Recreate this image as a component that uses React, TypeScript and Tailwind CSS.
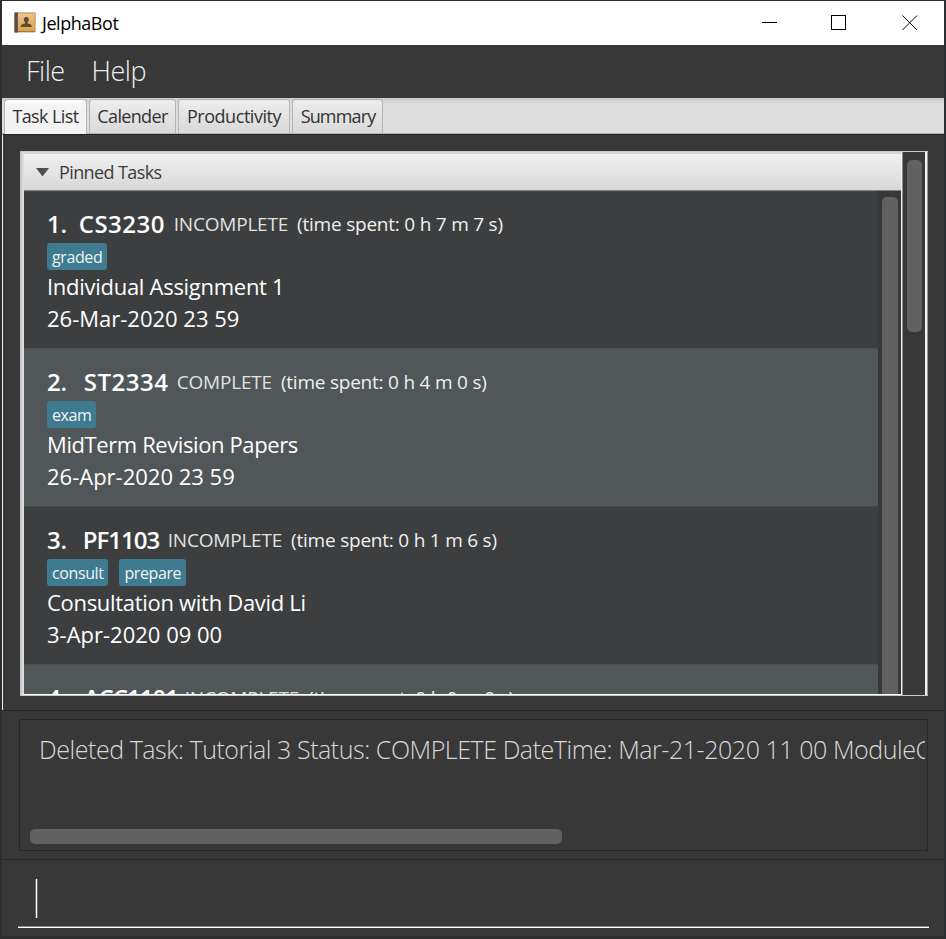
type Task = {
  index: string;
  module: string;
  moduleClass: string;
  status: string;
  spent: string;
  tags: string[];
  name: string;
  nameClass: string;
  date: string;
};

const tasks: Task[] = [
  {
    index: "1.",
    module: "CS3230",
    moduleClass: "ml-[12px] w-[95px] tracking-[0.5px]",
    status: "INCOMPLETE",
    spent: "(time spent: 0 h 7 m 7 s)",
    tags: ["graded"],
    name: "Individual Assignment 1",
    nameClass: "tracking-[-0.28px]",
    date: "26-Mar-2020 23 59",
  },
  {
    index: "2.",
    module: "ST2334",
    moduleClass: "ml-[17px] w-[93px] tracking-[0.5px]",
    status: "COMPLETE",
    spent: "(time spent: 0 h 4 m 0 s)",
    tags: ["exam"],
    name: "MidTerm Revision Papers",
    nameClass: "tracking-[-0.4px]",
    date: "26-Apr-2020 23 59",
  },
  {
    index: "3.",
    module: "PF1103",
    moduleClass: "ml-[16px] w-[85px] tracking-[-1px]",
    status: "INCOMPLETE",
    spent: "(time spent: 0 h 1 m 6 s)",
    tags: ["consult", "prepare"],
    name: "Consultation with David Li",
    nameClass: "tracking-[-0.3px]",
    date: "3-Apr-2020 09 00",
  },
  {
    index: "4.",
    module: "ACC1101",
    moduleClass: "ml-[17px] w-[101px] tracking-[-1px]",
    status: "INCOMPLETE",
    spent: "(time spent: 0 h 0 m 0 s)",
    tags: [],
    name: "",
    nameClass: "",
    date: "",
  },
];

const tabs = [
  { label: "Task List", className: "w-[83px] tracking-[-0.6px]", active: true },
  { label: "Calender", className: "w-[87px] tracking-[-0.65px]", active: false },
  { label: "Productivity", className: "w-[112px] tracking-[-0.45px]", active: false },
  { label: "Summary", className: "w-[91px] pl-px tracking-[-0.85px]", active: false },
];

function BookIcon() {
  return (
    <svg width="22" height="22" viewBox="0 0 22 22">
      <defs>
        <linearGradient id="cover" x1="0" y1="0" x2="0" y2="1">
          <stop offset="0" stopColor="#e6c690" />
          <stop offset="1" stopColor="#d6a44e" />
        </linearGradient>
      </defs>
      <rect x="0.5" y="0.5" width="21" height="20" rx="0.8" fill="#a87a38" />
      <rect x="1" y="20" width="20" height="1" fill="#d8d0c0" />
      <rect x="3.5" y="1.3" width="17.3" height="17.7" fill="url(#cover)" />
      <rect x="0.5" y="0.5" width="3.3" height="20" fill="#5d4c46" />
      <path
        d="M12.3 5C14 5 14.8 6 14.8 7.6c0 1.200-.5 2.100-1.200 2.800v1.200c1.700.4 4.200.7 4.200 3.400H6.800c0-2.700 2.500-3 4.200-3.400v-1.200C10.300 9.700 9.800 8.800 9.800 7.600 9.800 6 10.600 5 12.300 5z"
        fill="#5f4c2c"
      />
    </svg>
  );
}

function TitleBar() {
  return (
    <header className="flex h-11 shrink-0 items-center bg-white pl-3 text-black">
      <BookIcon />
      <h1 className="ml-[6px] text-[18px] leading-6 tracking-[-0.45px]">JelphaBot</h1>
      <svg className="ml-auto mr-[26px]" width="157" height="16" viewBox="0 0 157 16" fill="none" stroke="#000">
        <path d="M1 7.5h15" />
        <rect x="70.5" y="0.5" width="14" height="14" />
        <path d="M141.5 0.5l14.5 14.5M156 0.5l-14.5 14.5" />
      </svg>
    </header>
  );
}

function TaskCard({ task, shaded }: { task: Task; shaded: boolean }) {
  return (
    <li className={`h-[158px] shrink-0 border-t pl-[23px] pt-[14px] first:h-[157px] first:pt-[13px] ${shaded ? "border-[#485052] bg-[#515658]" : "border-[#45484a] bg-[#3c3e3f]"}`}>
      <div className="flex h-[38px] items-center whitespace-pre">
        <b className="text-[24px] font-semibold tracking-[-0.3px]">{task.index}</b>
        <b className={`text-[24px] font-semibold ${task.moduleClass}`}>{task.module}</b>
        <span className="text-[19px] tracking-[-0.2px] text-[#e2e2e2]">{task.status}</span>
        <span className="ml-[9px] text-[19px] tracking-[-0.22px] text-[#f0f0f0]">{task.spent}</span>
      </div>
      <div className="flex h-[27px] gap-[11px]">
        {task.tags.map((tag) => (
          <span key={tag} className="rounded-[3px] bg-[#3e7b91] px-[5px] text-[16px] leading-[28px] tracking-[-0.4px] text-[#f2f2f2]">
            {tag}
          </span>
        ))}
      </div>
      <p className={`h-8 text-[22px] leading-8 ${task.nameClass}`}>{task.name}</p>
      <p className="h-8 text-[22px] leading-8">{task.date}</p>
    </li>
  );
}

export default function App() {
  return (
    <div className="flex h-[939px] w-[946px] flex-col bg-[#2b2d2e] pl-[2px] pr-[2px] pt-px font-['Open_Sans','Noto_Sans',sans-serif] text-white">
      <TitleBar />
      <nav className="flex h-[53px] shrink-0 items-center gap-[27px] bg-[#383838] pl-6 text-[27px] font-light tracking-[-0.5px] text-[#efefef]">
        <span>File</span>
        <span>Help</span>
      </nav>
      <div className="flex h-9 shrink-0 gap-[2px] border-b border-[#b4b4b4] bg-linear-to-b from-[#cccccc] to-[#dedede] to-20% pl-[2px] pt-px text-[#323232]">
        {tabs.map((tab) => (
          <div
            key={tab.label}
            className={`flex items-center justify-center rounded-t-[4px] border border-b-0 border-[#b4b4b4] text-[18px] ${tab.className} ${tab.active ? "-mb-px h-[35px] bg-linear-to-b from-[#fdfdfd] to-[#f3f3f3] to-20% pb-px" : "h-[34px] bg-linear-to-b from-[#ededed] to-[#d9d9d9]"}`}
          >
            {tab.label}
          </div>
        ))}
      </div>

      <main className="h-[576px] shrink-0 border-l border-t border-l-[#f4f4f4] border-t-[#242424] bg-[#383838] pl-[17px] pt-4">
        <div className="flex h-[545px] w-[908px] border border-l-2 border-r-0 border-[#c8c8c8]">
          <section className="flex w-[880px] flex-col border-b border-l-2 border-r border-b-white border-l-[#dcdcdc] border-r-[#f0f0f0]">
            <h2 className="flex h-[39px] shrink-0 items-center border-b border-t-2 border-b-[#848484] border-t-[#d4d4d4] bg-linear-to-b from-[#f0f0f0] to-[#d8d8d8] pl-[12px] text-[18px] tracking-[-0.6px] text-[#3c3c3c]">
              <svg width="13" height="9" viewBox="0 0 13 9">
                <path d="M0 0h13l-6.5 8.5z" fill="#505050" />
              </svg>
              <span className="ml-[10px]">Pinned Tasks</span>
            </h2>
            <div className="flex min-h-0 flex-1 bg-[#383838]">
              <ul className="flex w-[854px] flex-col overflow-hidden">
                {tasks.map((task, i) => (
                  <TaskCard key={task.index} task={task} shaded={i % 2 === 1} />
                ))}
              </ul>
              <div className="flex flex-1 flex-col items-center overflow-hidden pt-[6px]">
                <div className="w-4 flex-1 rounded-t-[5px] bg-[#616161]" />
              </div>
            </div>
          </section>
          <div className="flex flex-1 flex-col items-center border-l border-r-2 border-l-[#8f8f8f] border-r-[#f0f0f0] bg-[#383838] pt-2">
            <div className="h-[172px] w-[15px] rounded-[5px] bg-[#616161]" />
          </div>
          <div className="w-px bg-[#9a9a9a]" />
        </div>
      </main>

      <section className="h-[149px] shrink-0 border-t border-[#282828] bg-[#383838] px-[17px] pt-2">
        <div className="flex h-[132px] w-[909px] flex-col justify-between overflow-hidden border border-[#282828] pb-[6px] pl-[10px]">
          <p className="mt-[11px] w-[895px] overflow-hidden whitespace-nowrap pl-[9px] text-[25px] font-light leading-[36px] tracking-[-0.45px] text-[#d8d8d8]">
            Deleted Task: Tutorial 3 Status: COMPLETE DateTime: Mar-21-2020 11 00 ModuleCode
          </p>
          <div className="h-[15px] w-[532px] rounded-[5px] bg-[#616161]" />
        </div>
      </section>

      <footer className="h-[77px] shrink-0 border-t border-[#282828] bg-[#383838] pl-4 pt-[19px]">
        <div className="h-[49px] w-[911px] border-b border-white pl-[17px] shadow-[inset_0_-1px_0_#8a8a8a]">
          <div className="h-[39px] w-[3px] border-x border-[#6b6b6b] bg-white" />
        </div>
      </footer>
    </div>
  );
}
